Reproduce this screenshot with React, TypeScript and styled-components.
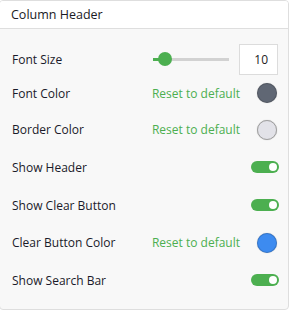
import React from "react";
import styled, { createGlobalStyle } from "styled-components";

const GlobalStyle = createGlobalStyle`
  body {
    margin: 0;
    background: #ffffff;
    font-family: "Open Sans", "Noto Sans", sans-serif;
  }
`;

const Card = styled.div`
  width: 290px;
  height: 310px;
  margin-left: -1px;
  box-sizing: border-box;
  border: 1px solid #dedede;
  border-radius: 4px;
  background: #f8f8f8;
  overflow: hidden;
`;

const Header = styled.div`
  height: 28px;
  box-sizing: border-box;
  display: flex;
  align-items: center;
  padding-left: 11px;
  padding-bottom: 1px;
  background: #ffffff;
  border-bottom: 1px solid #dedede;
  font-size: 12.5px;
  color: #1a1a24;
`;

const Body = styled.div`
  display: flex;
  flex-direction: column;
  padding: 14px 10px 0 12px;
`;

const Row = styled.div<{ $height: number }>`
  height: ${(p) => p.$height}px;
  display: flex;
  align-items: center;
  justify-content: space-between;
`;

const Label = styled.span`
  font-size: 12px;
  color: #1a1a2a;
`;

const Controls = styled.div`
  display: flex;
  align-items: center;
  gap: 10px;
`;

const Slider = styled.div`
  position: relative;
  width: 76px;
  height: 3px;
  background: #d2d2d2;
`;

const SliderFill = styled.div`
  height: 100%;
  background: #4caf50;
`;

const Thumb = styled.div`
  position: absolute;
  top: 50%;
  width: 14px;
  height: 14px;
  border-radius: 50%;
  background: #4caf50;
  transform: translate(-50%, -50%);
`;

const NumberBox = styled.div`
  width: 39px;
  height: 31px;
  box-sizing: border-box;
  border: 1px solid #dcdcdc;
  background: #ffffff;
  display: flex;
  align-items: center;
  justify-content: flex-end;
  padding-right: 9px;
  font-size: 12px;
  color: #222;
`;

const ResetLink = styled.span`
  font-size: 12px;
  color: #4caf50;
  cursor: pointer;
  margin-right: 7px;
`;

const Swatch = styled.div<{ $color: string; $outlined?: boolean }>`
  width: 20px;
  height: 20px;
  margin-right: 1px;
  border-radius: 50%;
  box-sizing: border-box;
  background: ${(p) => p.$color};
  border: 1px solid ${(p) => (p.$outlined ? "#a0a0a0" : "rgba(0, 0, 0, 0.15)")};
  box-shadow: 0 0 1px rgba(0, 0, 0, 0.3);
`;

const Toggle = styled.div<{ $on: boolean }>`
  width: 28px;
  height: 12px;
  margin-right: -1px;
  border-radius: 6px;
  background: ${(p) => (p.$on ? "#4caf50" : "#c8c8c8")};
  display: flex;
  align-items: center;
  justify-content: ${(p) => (p.$on ? "flex-end" : "flex-start")};
  padding: 0 2px;
  box-sizing: border-box;
`;

const Knob = styled.div`
  width: 8px;
  height: 8px;
  border-radius: 50%;
  background: #ffffff;
`;

const value = 10;
const percent = 16;

function ColorRow({
  label,
  color,
  outlined,
  height = 37,
}: {
  label: string;
  color: string;
  outlined?: boolean;
  height?: number;
}) {
  return (
    <Row $height={height}>
      <Label>{label}</Label>
      <Controls>
        <ResetLink>Reset to default</ResetLink>
        <Swatch $color={color} $outlined={outlined} />
      </Controls>
    </Row>
  );
}

function ToggleRow({ label }: { label: string }) {
  return (
    <Row $height={38}>
      <Label>{label}</Label>
      <Toggle $on>
        <Knob />
      </Toggle>
    </Row>
  );
}

export default function App(): React.ReactElement {
  return (
    <>
      <GlobalStyle />
      <Card>
        <Header>Column Header</Header>
        <Body>
          <Row $height={32}>
            <Label>Font Size</Label>
            <Controls>
              <Slider>
                <SliderFill style={{ width: `${percent}%` }} />
                <Thumb style={{ left: `${percent}%` }} />
              </Slider>
              <NumberBox>{value}</NumberBox>
            </Controls>
          </Row>
          <ColorRow label="Font Color" color="#606774" height={36} />
          <ColorRow label="Border Color" color="#e2e2e8" outlined />
          <ToggleRow label="Show Header" />
          <ToggleRow label="Show Clear Button" />
          <ColorRow label="Clear Button Color" color="#3d8bf0" />
          <ToggleRow label="Show Search Bar" />
        </Body>
      </Card>
    </>
  );
}
